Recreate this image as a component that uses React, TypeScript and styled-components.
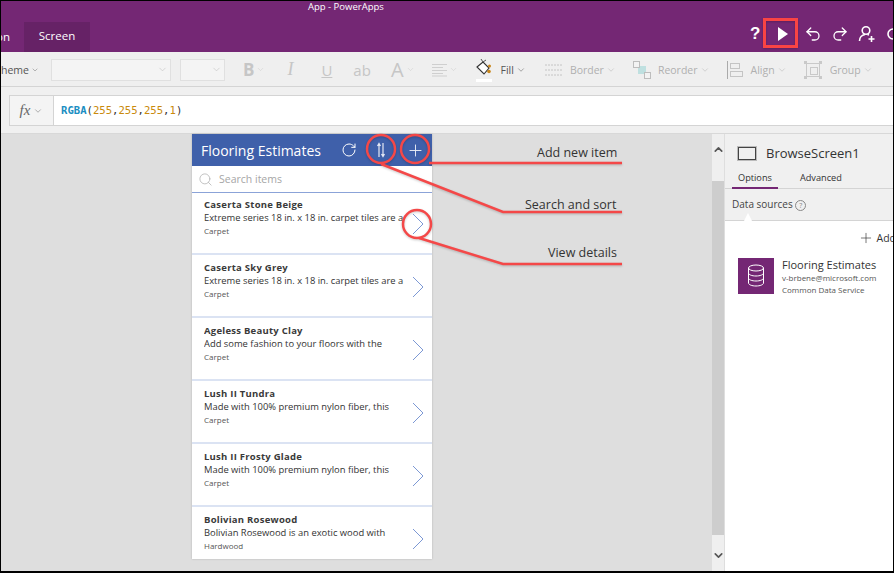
import React from 'react';
import styled, { createGlobalStyle } from 'styled-components';
import { ChevronDown, ChevronUp, Plus, RotateCw, Search, Undo2, Redo2 } from 'lucide-react';

const PRODUCTS = [
  { name: 'Caserta Stone Beige', text: 'Extreme series 18 in. x 18 in. carpet tiles are a', kind: 'Carpet' },
  { name: 'Caserta Sky Grey', text: 'Extreme series 18 in. x 18 in. carpet tiles are a', kind: 'Carpet' },
  { name: 'Ageless Beauty Clay', text: 'Add some fashion to your floors with the', kind: 'Carpet' },
  { name: 'Lush II Tundra', text: 'Made with 100% premium nylon fiber, this', kind: 'Carpet' },
  { name: 'Lush II Frosty Glade', text: 'Made with 100% premium nylon fiber, this', kind: 'Carpet' },
  { name: 'Bolivian Rosewood', text: 'Bolivian Rosewood is an exotic wood with', kind: 'Hardwood' },
];

const LABELS = [
  { text: 'Add new item', left: 536, top: 144 },
  { text: 'Search and sort', left: 524, top: 196 },
  { text: 'View details', left: 547, top: 244 },
];

const App = () => (
  <>
    <GlobalStyle />
    <Frame>
      <TitleBar>
        <WindowTitle>App - PowerApps</WindowTitle>
        <Ribbon>
          <CutTab>on</CutTab>
          <ActiveTab>Screen</ActiveTab>
          <RibbonActions>
            <Help>?</Help>
            <PlayBox>
              <svg width="12" height="14" viewBox="0 0 12 14"><path d="M1 0l10 7-10 7z" fill="#fff" /></svg>
            </PlayBox>
            <UndoIcon size={18} color="#fff" strokeWidth={1.7} />
            <RedoIcon size={18} color="#fff" strokeWidth={1.7} />
            <ActionSvg width="18" height="18" viewBox="0 0 18 18" fill="none" stroke="#fff" strokeWidth="1.600">
              <circle cx="8" cy="5.500" r="3.800" />
              <path d="M1.500 16c0-3.500 2.500-6 5.500-6.500M9.500 9.500l1.500.5M13.500 11v6M10.500 14h6" />
            </ActionSvg>
            <ActionSvg width="14" height="18" viewBox="0 0 14 18" fill="none" stroke="#fff" strokeWidth="1.600">
              <circle cx="8" cy="9" r="5" />
            </ActionSvg>
          </RibbonActions>
        </Ribbon>
      </TitleBar>

      <Toolbar>
        <FillText $width={38}>heme<ChevronDown size={10} strokeWidth={1.2} /></FillText>
        <Select $width={120} $gap={12}><ChevronDown size={11} strokeWidth={1.2} /></Select>
        <Select $width={45} $gap={9}><ChevronDown size={11} strokeWidth={1.2} /></Select>
        <Glyph $gap={18} $weight={700} $size={17}>B</Glyph>
        <Caret size={9} strokeWidth={1.2} />
        <Glyph $gap={22} $size={18} $italic $serif>I</Glyph>
        <Glyph $gap={28} $size={15} $underline>U</Glyph>
        <Glyph $gap={21} $size={15}>ab</Glyph>
        <Glyph $gap={20} $size={20}>A</Glyph>
        <Caret size={9} strokeWidth={1.2} />
        <ToolSvg $gap={17} width="15" height="14" viewBox="0 0 15 14">
          <path d="M0 1.500h15M0 4.500h11M0 7.500h15M0 10.500h11M0 13h15" stroke="#cfcfcf" strokeWidth="1" />
        </ToolSvg>
        <Caret size={9} strokeWidth={1.2} />
        <ToolSvg $gap={18} width="16" height="24" viewBox="0 0 16 24">
          <path d="M1 9l6-5 6 6-5 6z" fill="#fff" stroke="#333" strokeWidth="1.100" />
          <path d="M5 1l2 3 3-2" fill="none" stroke="#555" strokeWidth="1" />
          <circle cx="13.500" cy="8" r="1.500" fill="#c9861a" />
          <circle cx="13" cy="13.500" r="1.800" fill="#c9861a" />
          <rect y="21" width="16" height="3" fill="#fff" />
        </ToolSvg>
        <FillText $gap={9}>Fill<ChevronDown size={10} strokeWidth={1.2} /></FillText>
        <ToolSvg $gap={19} width="17" height="12" viewBox="0 0 17 12">
          <path d="M0 1h17M0 6h17M0 11h17" stroke="#c4c4c4" strokeDasharray="2 1" />
        </ToolSvg>
        <ToolText $gap={8}>Border<ChevronDown size={10} strokeWidth={1.2} /></ToolText>
        <ToolSvg $gap={17} width="18" height="18" viewBox="0 0 18 18">
          <rect x="5" y="5" width="8" height="8" fill="#bfe0e0" />
          <rect x="0.5" y="0.5" width="6" height="6" fill="#f3f3f3" stroke="#bdbdbd" />
          <rect x="11.5" y="11.5" width="6" height="6" fill="#f3f3f3" stroke="#bdbdbd" />
        </ToolSvg>
        <ToolText $gap={7}>Reorder<ChevronDown size={10} strokeWidth={1.2} /></ToolText>
        <ToolSvg $gap={17} width="16" height="18" viewBox="0 0 16 18">
          <path d="M0.500 0v18" stroke="#aaa" />
          <rect x="3.500" y="2.500" width="9" height="5" fill="none" stroke="#c4c4c4" />
          <rect x="3.500" y="10.500" width="12" height="5" fill="none" stroke="#c4c4c4" />
        </ToolSvg>
        <ToolText $gap={8}>Align<ChevronDown size={10} strokeWidth={1.2} /></ToolText>
        <ToolSvg $gap={17} width="18" height="18" viewBox="0 0 18 18">
          <rect x="2.500" y="2.500" width="13" height="13" fill="none" stroke="#c9c9c9" />
          <rect x="6.500" y="6.500" width="7" height="7" fill="none" stroke="#c9c9c9" />
          <path d="M0 0h3v3H0zM15 0h3v3h-3zM0 15h3v3H0zM15 15h3v3h-3z" fill="#c9c9c9" />
        </ToolSvg>
        <ToolText $gap={8}>Group<ChevronDown size={10} strokeWidth={1.2} /></ToolText>
      </Toolbar>

      <FormulaRow>
        <FormulaBox>
          <FxCell><Fx>fx</Fx><ChevronDown size={10} strokeWidth={1.2} color="#666" /></FxCell>
          <Formula>
            <Fn>RGBA</Fn>(<Num>255</Num>,<Num>255</Num>,<Num>255</Num>,<Num>1</Num>)
          </Formula>
        </FormulaBox>
      </FormulaRow>

      <Workspace>
        <Canvas>
          <Phone>
            <PhoneHeader>
              <PhoneTitle>Flooring Estimates</PhoneTitle>
              <RotateCw size={16} color="#fff" strokeWidth={1.5} />
              <SortIcon width="12" height="16" viewBox="0 0 12 16">
                <path d="M4 15V2M2.500 4L4 1.500 5.500 4M8 1v13M6.500 12L8 14.500 9.500 12" fill="none" stroke="#e4e8f4" strokeWidth="1.200" />
              </SortIcon>
              <AddIcon size={19} color="#e8ecf6" strokeWidth={1.200} />
            </PhoneHeader>
            <SearchRow>
              <Search size={15} color="#b5b5b5" strokeWidth={1.300} />
              <SearchText>Search items</SearchText>
            </SearchRow>
            {PRODUCTS.map((item, i) => (
              <Item key={item.name} $first={i === 0} $last={i === PRODUCTS.length - 1}>
                <ItemBody>
                  <ItemName>{item.name}</ItemName>
                  <ItemText>{item.text}</ItemText>
                  <ItemKind>{item.kind}</ItemKind>
                </ItemBody>
                <ItemArrow>
                  <svg width="12" height="22" viewBox="0 0 12 22" fill="none" stroke="#7c98d4" strokeWidth="1">
                    <path d="M1 1l10 10L1 21" />
                  </svg>
                </ItemArrow>
              </Item>
            ))}
          </Phone>
        </Canvas>

        <ScrollBar>
          <ChevronUp size={13} color="#555" strokeWidth={3} />
          <Thumb />
          <ChevronDown size={13} color="#555" strokeWidth={3} />
        </ScrollBar>

        <Panel>
          <PanelHead>
            <ScreenIcon />
            <ScreenName>BrowseScreen1</ScreenName>
          </PanelHead>
          <Tabs>
            <PanelTab $active>Options</PanelTab>
            <PanelTab>Advanced</PanelTab>
          </Tabs>
          <SectionRow>Data sources <HelpDot>?</HelpDot><Notch /></SectionRow>
          <PanelBody>
            <AddLine><Plus size={16} strokeWidth={1} color="#333" />Add</AddLine>
            <Source>
              <SourceIcon>
                <svg width="18" height="24" viewBox="0 0 18 24" fill="none" stroke="#fff" strokeWidth="1">
                  <ellipse cx="9" cy="4" rx="7.500" ry="3" />
                  <path d="M1.500 4v15c0 1.700 3.400 3 7.500 3s7.500-1.300 7.500-3V4M1.500 9c0 1.700 3.400 3 7.500 3s7.500-1.300 7.500-3M1.500 14c0 1.700 3.400 3 7.500 3s7.500-1.300 7.500-3" />
                </svg>
              </SourceIcon>
              <div>
                <SourceName>Flooring Estimates</SourceName>
                <SourceMeta>v-brbene@microsoft.com</SourceMeta>
                <SourceMeta>Common Data Service</SourceMeta>
              </div>
            </Source>
          </PanelBody>
        </Panel>
      </Workspace>

      {/* callouts drawn over the screenshot */}
      <Callouts width="894" height="573" viewBox="0 0 894 573">
        <rect x="764.500" y="19.500" width="32" height="27" fill="none" stroke="#f94444" strokeWidth="3" />
        <g fill="none" stroke="#f44848" strokeWidth="2.500">
          <circle cx="381" cy="149" r="14" />
          <circle cx="415" cy="149" r="14" />
          <circle cx="417" cy="224" r="14" />
          <path d="M429 163H622M381 164L503 212H622M419 238L503 264H622" />
        </g>
      </Callouts>
      {LABELS.map((label) => (
        <Callout key={label.text} style={{ left: label.left, top: label.top }}>{label.text}</Callout>
      ))}
    </Frame>
  </>
);
export default App;

const GlobalStyle = createGlobalStyle`
  html, body {
    margin: 0;
    padding: 0;
    background: #000;
    overflow: hidden;
  }
  body {
    font-family: "Open Sans", "Noto Sans", sans-serif;
  }
`;

const Frame = styled.div`
  position: relative;
  box-sizing: border-box;
  width: 894px;
  height: 573px;
  border: solid #000;
  border-width: 1px 1px 2px 1px;
  display: flex;
  flex-direction: column;
  overflow: hidden;
  background: #dedede;
`;

const TitleBar = styled.div`
  height: 51px;
  flex: none;
  background: #742774;
  color: #fff;
  display: flex;
  flex-direction: column;
`;

const WindowTitle = styled.div`
  height: 21px;
  padding-left: 307px;
  font-size: 9.500px;
  line-height: 11px;
`;

const Ribbon = styled.div`
  height: 30px;
  display: flex;
  align-items: stretch;
  font-size: 11.500px;
`;

const CutTab = styled.div`
  width: 23px;
  line-height: 30px;
  text-indent: -5px;
`;

const ActiveTab = styled.div`
  width: 66px;
  text-align: center;
  line-height: 28px;
  background: #662266;
`;

const RibbonActions = styled.div`
  margin-left: auto;
  margin-top: -6px;
  width: 143px;
  display: flex;
  align-items: center;
  gap: 9px;
  overflow: hidden;
`;

const ActionSvg = styled.svg`
  flex: none;
`;

const UndoIcon = styled(Undo2)`
  flex: none;
`;

const RedoIcon = styled(Redo2)`
  flex: none;
`;

const Help = styled.span`
  font: 700 17px "Liberation Sans", sans-serif;
  width: 12px;
  flex: none;
`;

const PlayBox = styled.span`
  width: 24px;
  flex: none;
  display: flex;
  align-items: center;
  justify-content: center;
`;

const Toolbar = styled.div`
  height: 35px;
  flex: none;
  box-sizing: border-box;
  padding-top: 1px;
  background: #efefef;
  border-bottom: 1px solid #d4d4d4;
  display: flex;
  align-items: center;
  color: #b8b8b8;
  overflow: hidden;
  white-space: nowrap;
`;

const ToolText = styled.span<{ $gap?: number; $width?: number }>`
  margin-left: ${({ $gap }) => $gap ?? 0}px;
  ${({ $width }) => $width && `width: ${$width}px;`}
  flex: none;
  font-size: 10.500px;
  color: #b0b0b0;
  display: inline-flex;
  align-items: center;
  gap: 2px;
`;

const FillText = styled(ToolText)`
  color: #555;
`;

const Select = styled.div<{ $width: number; $gap: number }>`
  width: ${({ $width }) => $width}px;
  margin-left: ${({ $gap }) => $gap}px;
  height: 22px;
  flex: none;
  box-sizing: border-box;
  background: #f4f4f4;
  border: 1px solid #e0e0e0;
  display: flex;
  align-items: center;
  justify-content: flex-end;
  padding-right: 2px;
  color: #bbb;
`;

const Glyph = styled.span<{ $gap: number; $size: number; $weight?: number; $italic?: boolean; $serif?: boolean; $underline?: boolean }>`
  margin-left: ${({ $gap }) => $gap}px;
  flex: none;
  font-size: ${({ $size }) => $size}px;
  font-weight: ${({ $weight }) => $weight ?? 400};
  font-style: ${({ $italic }) => ($italic ? 'italic' : 'normal')};
  font-family: ${({ $serif }) => ($serif ? '"Liberation Serif", serif' : '"Open Sans", sans-serif')};
  text-decoration: ${({ $underline }) => ($underline ? 'underline' : 'none')};
  color: #c6c6c6;
`;

const Caret = styled(ChevronDown)`
  color: #c6c6c6;
  margin-left: 2px;
  flex: none;
`;

const ToolSvg = styled.svg<{ $gap: number }>`
  margin-left: ${({ $gap }) => $gap}px;
  flex: none;
`;

const FormulaRow = styled.div`
  height: 47px;
  flex: none;
  box-sizing: border-box;
  padding: 8px 0 0 8px;
  background: #f0f0f0;
  border-bottom: 1px solid #d8d8d8;
`;

const FormulaBox = styled.div`
  height: 31px;
  box-sizing: border-box;
  background: #fff;
  border-top: 1px solid #d4d4d4;
  border-bottom: 1px solid #d4d4d4;
  display: flex;
`;

const FxCell = styled.div`
  width: 45px;
  box-sizing: border-box;
  background: #f4f4f4;
  border: 1px solid #d4d4d4;
  border-width: 0 1px;
  display: flex;
  align-items: center;
  justify-content: center;
  gap: 3px;
`;

const Fx = styled.span`
  font: italic 15px "Liberation Serif", serif;
  color: #666;
`;

const Formula = styled.div`
  padding-left: 7px;
  font: 10.600px/29px "DejaVu Sans Mono", monospace;
  color: #333;
`;

const Fn = styled.span`
  color: #1b8ec2;
  font-weight: 700;
`;

const Num = styled.span`
  color: #c98a0c;
`;

const Workspace = styled.div`
  flex: 1;
  min-height: 0;
  display: flex;
`;

const Canvas = styled.div`
  width: 708px;
  flex: none;
  box-sizing: border-box;
  padding-left: 191px;
`;

const Phone = styled.div`
  width: 240px;
  height: 425px;
  background: #fff;
  box-shadow: 0 0 2px rgba(0, 0, 0, 0.2);
`;

const PhoneHeader = styled.div`
  height: 32px;
  background: #3f60aa;
  display: flex;
  align-items: center;
  padding: 0 6px 0 9px;
  color: #fff;
`;

const PhoneTitle = styled.div`
  font-size: 14px;
  margin-right: auto;
`;

const SortIcon = styled.svg`
  margin: 0 19px 0 18px;
`;

const AddIcon = styled(Plus)`
  margin-right: 1px;
`;

const SearchRow = styled.div`
  height: 26px;
  box-sizing: border-box;
  display: flex;
  align-items: center;
  gap: 6px;
  padding-left: 6px;
`;

const SearchText = styled.span`
  font-size: 10.500px;
  color: #a6a6a6;
`;

const Item = styled.div<{ $first: boolean; $last: boolean }>`
  height: ${({ $last }) => ($last ? 52 : 63)}px;
  box-sizing: border-box;
  border-bottom: ${({ $last }) => ($last ? 'none' : '2px solid #dbe3f3')};
  ${({ $first }) => $first && 'box-shadow: inset 0 1px 0 #8ba3d8;'}
  display: flex;
  padding-left: 12px;
`;

const ItemBody = styled.div`
  flex: 1;
  min-width: 0;
  padding-top: 6px;
  overflow: hidden;
`;

const ItemName = styled.div`
  font-size: 9.500px;
  font-weight: 700;
  letter-spacing: 0.25px;
  line-height: 13px;
  color: #3a3a3a;
  white-space: nowrap;
`;

const ItemText = styled.div`
  font-size: 9.400px;
  line-height: 13px;
  color: #333;
  white-space: nowrap;
`;

const ItemKind = styled.div`
  font-size: 8px;
  line-height: 13px;
  color: #555;
`;

const ItemArrow = styled.div`
  width: 28px;
  flex: none;
  box-sizing: border-box;
  padding: 21px 0 0 8px;
  svg { display: block; }
`;

const ScrollBar = styled.div`
  width: 12px;
  margin-left: 3px;
  flex: none;
  background: #efefef;
  display: flex;
  flex-direction: column;
  align-items: center;
  padding: 9px 0;
  gap: 5px;
`;

const Thumb = styled.div`
  flex: 1;
  align-self: stretch;
  background: #cdcdcd;
  margin: 20px 0 9px;
`;

const Panel = styled.div`
  flex: 1;
  min-width: 0;
  margin-left: 1px;
  background: #fff;
  display: flex;
  flex-direction: column;
`;

const PanelHead = styled.div`
  background: #f0f0f0;
  height: 36px;
  padding: 2px 0 0 13px;
  box-sizing: border-box;
  display: flex;
  align-items: center;
  gap: 10px;
`;

const ScreenIcon = styled.div`
  width: 16px;
  height: 11px;
  border: 1.500px solid #444;
  outline: 1px solid #bbb;
`;

const ScreenName = styled.div`
  font-size: 13px;
  color: #333;
`;

const Tabs = styled.div`
  background: #f0f0f0;
  height: 19px;
  box-sizing: border-box;
  border-bottom: 1px solid #d4d4d4;
  padding-left: 7px;
  display: flex;
  gap: 16px;
`;

const PanelTab = styled.div<{ $active?: boolean }>`
  font-size: 9.200px;
  line-height: 15px;
  padding: 0 6px;
  color: #333;
  height: 19px;
  box-sizing: border-box;
  border-bottom: ${({ $active }) => ($active ? '2px solid #742774' : 'none')};
`;

const SectionRow = styled.div`
  position: relative;
  background: #f0f0f0;
  height: 32px;
  box-sizing: border-box;
  border-bottom: 1px solid #d4d4d4;
  padding: 8px 0 0 7px;
  font-size: 10px;
  color: #444;
`;

const HelpDot = styled.span`
  display: inline-block;
  width: 9px;
  height: 9px;
  border: 1px solid #888;
  border-radius: 50%;
  font-size: 7px;
  line-height: 9px;
  text-align: center;
  color: #888;
`;

const Notch = styled.span`
  position: absolute;
  left: 19px;
  bottom: -1px;
  width: 8px;
  height: 8px;
  background: #fff;
  clip-path: polygon(50% 0, 100% 100%, 0 100%);
`;

const PanelBody = styled.div`
  flex: 1;
  padding: 9px 0 0 13px;
`;

const AddLine = styled.div`
  display: flex;
  justify-content: flex-end;
  align-items: center;
  gap: 3px;
  font-size: 10.500px;
  color: #333;
  white-space: nowrap;
  margin-right: -3px;
  height: 16px;
`;

const Source = styled.div`
  margin-top: 12px;
  display: flex;
  gap: 8px;
`;

const SourceIcon = styled.div`
  width: 36px;
  height: 36px;
  flex: none;
  background: #742774;
  display: flex;
  align-items: center;
  justify-content: center;
`;

const SourceName = styled.div`
  font-size: 11px;
  line-height: 14px;
  color: #333;
  white-space: nowrap;
`;

const SourceMeta = styled.div`
  font-size: 8px;
  line-height: 12px;
  color: #555;
  white-space: nowrap;
`;

const Callouts = styled.svg`
  position: absolute;
  left: -1px;
  top: -1px;
  pointer-events: none;
  filter: drop-shadow(0 1px 1px rgba(0, 0, 0, 0.2));
`;

const Callout = styled.div`
  position: absolute;
  font-size: 12.500px;
  line-height: 16px;
  color: #333;
  white-space: nowrap;
`;
